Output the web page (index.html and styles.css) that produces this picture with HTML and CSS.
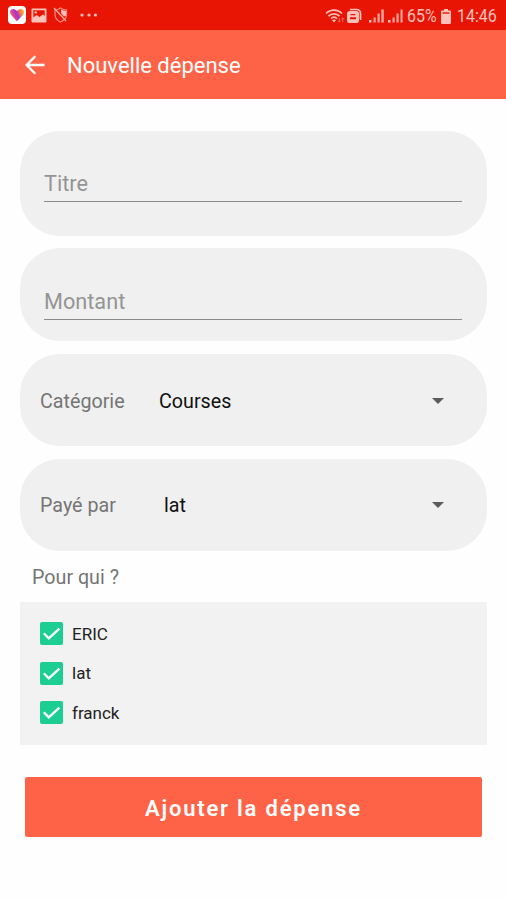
FILE: index.html
```html
<!DOCTYPE html>
<html lang="fr">
<head>
    <meta charset="UTF-8">
    <meta name="viewport" content="width=device-width, initial-scale=1.0">
    <title>Nouvelle dépense</title>
    <link rel="stylesheet" href="styles.css">
</head>
<body>
    <div class="status-bar">
        <div class="notifications">
            <svg width="18" height="18" viewBox="0 0 18 18">
                <defs>
                    <linearGradient id="heart" x1="0" y1="0.6" x2="1" y2="0.2">
                        <stop offset="0" stop-color="#ff9a3c"/>
                        <stop offset="0.25" stop-color="#e0409a"/>
                        <stop offset="0.5" stop-color="#a035d0"/>
                        <stop offset="0.75" stop-color="#ff7a4a"/>
                        <stop offset="1" stop-color="#ffb320"/>
                    </linearGradient>
                </defs>
                <rect width="18" height="18" rx="4" fill="#fff"/>
                <path fill="url(#heart)" d="M9 15.2 3.3 9.3C.8 6.4 2.3 3 5.2 3 7 3 8.3 4 9 5.1 9.7 4 11 3 12.8 3c2.900 0 4.400 3.400 1.900 6.300z"/>
            </svg>
            <svg class="icon-image" width="16" height="15" viewBox="0 0 16 15">
                <path fill="#ffc2ba" fill-rule="evenodd" d="M1.500.5h13a1 1 0 0 1 1 1v12a1 1 0 0 1-1 1h-13a1 1 0 0 1-1-1v-12a1 1 0 0 1 1-1zM2.300 2.300v7.200l3.200-2.500 3 2 3.500-2.500 1.700 1.500V2.300zM4.700 3.200a1.200 1.200 0 1 1 0 2.400 1.200 1.200 0 0 1 0-2.400z"/>
            </svg>
            <svg class="icon-shield" width="16" height="16" viewBox="0 0 16 16">
                <path fill="none" stroke="#f98d84" stroke-width="1.200" d="M2 3c2 0 3.800-.6 5.500-2C9.500 2.400 11.500 3 13.500 3v4.500c0 3.500-2.500 6-6 7.500-3.500-1.500-5.500-4-5.500-7.500z"/>
                <path fill="#ffc2ba" d="M8 2.500c1.500.9 3 1.200 5 1.300v4.700l-2 1L8 6z"/>
                <path stroke="#ffb0a8" stroke-width="1.200" d="m1 1 12 13"/>
            </svg>
            <svg class="icon-more" width="18" height="4" viewBox="0 0 18 4" fill="#ffc2ba">
                <circle cx="2" cy="2" r="1.600"/>
                <circle cx="9" cy="2" r="1.600"/>
                <circle cx="15.500" cy="2" r="1.600"/>
            </svg>
        </div>
        <div class="system">
            <svg width="20" height="16" viewBox="0 0 20 16" fill="none" stroke="#ffc2ba" stroke-width="1.700">
                <path d="M1 5.500c4.500-4.600 11.500-4.600 16 0M3.500 8.200c3-3.200 8-3.200 11 0M6 10.700c1.800-1.800 4.200-1.800 6 0"/>
                <path fill="#ffc2ba" stroke="none" d="m9 14.500-2-2.300c1.200-1 2.800-1 4 0z"/>
                <path stroke="#f5665d" stroke-width="1.200" d="M14.500 10v4m-1.200-1.200 1.200 1.200M17.500 14v-4m1.200 1.200L17.500 10"/>
            </svg>
            <svg class="icon-data" width="15" height="16" viewBox="0 0 15 16">
                <path fill="none" stroke="#ffc2ba" stroke-width="1.700" d="M3 1.500h6.500c2.500 0 4 1.500 4 4V12"/>
                <path fill="#ffc2ba" fill-rule="evenodd" d="M3 3h6a3 3 0 0 1 3 3v6.500a2.500 2.500 0 0 1-2.500 2.500h-7A2.500 2.500 0 0 1 0 12.500V6a3 3 0 0 1 3-3zm.5 3v1.300h5V6zM3 9.200v2h6v-2z"/>
            </svg>
            <svg class="icon-signal" width="15" height="14" viewBox="0 0 15 14" fill="#ffc2ba">
                <path d="M0 11h2.500v2.500H0z"/>
                <path fill="#fba399" d="M4.500 8.500h2.200v5H4.500zM8.500 4.500h2.200v9H8.500zM12.300.5h2.500v13h-2.500z"/>
            </svg>
            <svg class="icon-signal2" width="15" height="14" viewBox="0 0 15 14" fill="#ffc2ba">
                <path d="M0 11h2.500v2.500H0z"/>
                <path fill="#fba399" d="M4.500 8.500h2.200v5H4.500zM8.500 4.500h2.200v9H8.500zM12.500.5h2.100v13h-2.100z"/>
            </svg>
            <span class="percent">65%</span>
            <svg class="icon-battery" width="10" height="15" viewBox="0 0 10 15">
                <path fill="#ffc2ba" d="M3 0h4v1.500h2a1 1 0 0 1 1 1V14a1 1 0 0 1-1 1H1a1 1 0 0 1-1-1V2.500a1 1 0 0 1 1-1h2z"/>
                <path fill="#ee4a3c" d="M1.500 3h7v2h-7z"/>
            </svg>
            <span class="clock">14:46</span>
        </div>
    </div>

    <header class="app-bar">
        <svg class="back" width="20" height="20" viewBox="0 0 20 20" fill="none" stroke="#fff" stroke-width="2.300">
            <path d="M19.500 10H2M10.300 1.200 1.600 10l8.700 8.800"/>
        </svg>
        <h1>Nouvelle dépense</h1>
    </header>

    <form class="expense">
        <div class="card card-title">
            <input class="field" type="text" placeholder="Titre">
        </div>
        <div class="card card-amount">
            <input class="field" type="text" placeholder="Montant">
        </div>
        <div class="card card-select">
            <span class="label">Catégorie</span>
            <span class="value">Courses</span>
            <span class="arrow"></span>
        </div>
        <div class="card card-select card-payer">
            <span class="label">Payé par</span>
            <span class="value">lat</span>
            <span class="arrow"></span>
        </div>

        <h2>Pour qui ?</h2>
        <div class="people">
            <div class="person">
                <svg class="check" viewBox="0 0 23 23"><path d="m3.800 11.300 5 5L19.300 6.600"/></svg>
                <span>ERIC</span>
            </div>
            <div class="person">
                <svg class="check" viewBox="0 0 23 23"><path d="m3.800 11.300 5 5L19.300 6.600"/></svg>
                <span>lat</span>
            </div>
            <div class="person">
                <svg class="check" viewBox="0 0 23 23"><path d="m3.800 11.300 5 5L19.300 6.600"/></svg>
                <span>franck</span>
            </div>
        </div>

        <button class="btn" type="button">Ajouter la dépense</button>
    </form>
</body>
</html>
```
FILE: styles.css
```css
* {
    box-sizing: border-box;
}
body {
    margin: 0;
    font-family: Roboto, sans-serif;
    background: #fefefe;
}
.status-bar {
    display: flex;
    justify-content: space-between;
    height: 30px;
    padding: 0 9px 0 8px;
    background: #e81505;
    color: #ffc2ba;
}
.notifications, .system {
    display: flex;
    align-items: center;
}
.icon-image {
    margin-left: 5px;
}
.icon-shield {
    margin-left: 6px;
}
.icon-more {
    margin-left: 11px;
}
.system {
    padding-top: 2px;
}
.icon-data {
    margin-left: 2px;
}
.icon-signal {
    margin-left: 7px;
}
.icon-signal2 {
    margin-left: 4px;
}
.percent, .clock {
    font-size: 18.5px;
    transform: scaleX(0.86);
    transform-origin: left;
}
.percent {
    width: 29px;
    margin-left: 4px;
}
.icon-battery {
    margin-left: 5px;
}
.clock {
    width: 40px;
    margin-left: 6px;
}
.app-bar {
    display: flex;
    align-items: center;
    height: 69px;
    padding-left: 25px;
    background: #ff6347;
    color: #fff;
}
.app-bar h1 {
    margin: 2px 0 0 22px;
    font-size: 22px;
    font-weight: 400;
}
.expense {
    padding: 32px 19px 0 20px;
}
.card {
    height: 92px;
    margin-bottom: 13px;
    background: #f0f0f0;
    border-radius: 40px;
}
.card-title {
    height: 105px;
    margin-bottom: 12px;
    padding: 33px 25px 0 24px;
}
.card-amount {
    height: 93px;
    padding: 34px 25px 0 24px;
}
.field {
    display: block;
    width: 100%;
    height: 38px;
    padding: 1px 0 0;
    border: none;
    border-bottom: 1px solid #8c8c8c;
    background: none;
    font-family: inherit;
    font-size: 21.7px;
    outline: none;
}
.field::placeholder {
    color: #949494;
}
.card-select {
    display: flex;
    align-items: center;
    padding: 2px 43px 0 20px;
    font-size: 19.7px;
}
.label {
    width: 119px;
    color: #757575;
}
.value {
    flex: 1;
    color: #111;
}
.card-payer {
    padding-top: 0;
}
.card-payer .value {
    padding-left: 5px;
}
.arrow {
    border: 6px solid transparent;
    border-top-color: #5c5c5c;
    border-bottom: none;
}
.expense h2 {
    margin: 0 0 0 12px;
    color: #757575;
    font-size: 19.7px;
    font-weight: 400;
    line-height: 28px;
}
.people {
    height: 143px;
    margin-top: 10px;
    padding-top: 12px;
    background: #f2f2f2;
}
.person {
    display: flex;
    align-items: center;
    height: 39.5px;
    padding-left: 20px;
    color: #222;
    font-size: 17px;
}
.check {
    width: 23px;
    height: 23px;
    margin-right: 9px;
    border-radius: 2px;
    background: #1dce92;
}
.check path {
    fill: none;
    stroke: #fff;
    stroke-width: 2.3;
}
.btn {
    display: block;
    width: 457px;
    height: 60px;
    margin: 32px 0 0 5px;
    padding-top: 3px;
    border: none;
    border-radius: 2px;
    background: #ff6347;
    color: #fff;
    font-family: inherit;
    font-size: 22px;
    font-weight: 600;
    letter-spacing: 1.8px;
}
```
